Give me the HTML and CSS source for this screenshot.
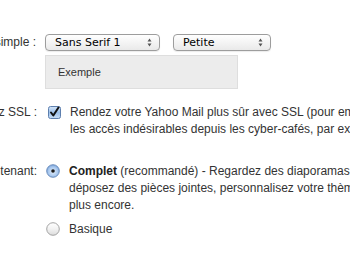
FILE: index.html
```html
<!DOCTYPE html>
<html lang="fr">
<head>
<meta charset="utf-8">
<title>Options</title>
<link rel="stylesheet" href="styles.css">
</head>
<body>
<div class="page">
  <div class="row row-font">
    <div class="label">Police de l'éditeur simple :</div>
    <div class="content">
      <div class="selects">
        <div class="select sel-family"><span>Sans Serif 1</span>
          <svg class="arrows" width="5" height="9" viewBox="0 0 5 9"><path d="M2.5 0.5 L4.5 3.5 L0.5 3.5 Z M2.5 8.5 L4.5 5.5 L0.5 5.5 Z" fill="#555"/></svg>
        </div>
        <div class="select sel-size"><span>Petite</span>
          <svg class="arrows" width="5" height="9" viewBox="0 0 5 9"><path d="M2.5 0.5 L4.5 3.5 L0.5 3.5 Z M2.5 8.5 L4.5 5.5 L0.5 5.5 Z" fill="#555"/></svg>
        </div>
      </div>
      <div class="preview">Exemple</div>
    </div>
  </div>

  <div class="row row-ssl">
    <div class="label">Activez SSL :</div>
    <div class="content option">
      <svg class="check" width="13" height="13" viewBox="0 0 13 13">
        <defs>
          <linearGradient id="cb" x1="0" y1="0" x2="0" y2="1">
            <stop offset="0" stop-color="#d6e6f8"/>
            <stop offset="0.5" stop-color="#9cc0ea"/>
            <stop offset="1" stop-color="#c9def5"/>
          </linearGradient>
        </defs>
        <rect x="0.5" y="0.5" width="12" height="12" rx="2" fill="url(#cb)" stroke="#5d7fae"/>
        <path d="M3 6.5 L5.3 9.5 L10.5 1.5" fill="none" stroke="#111" stroke-width="2" stroke-linecap="round" stroke-linejoin="round"/>
      </svg>
      <div class="text">Rendez votre Yahoo Mail plus sûr avec SSL (pour empêcher<br>les accès indésirables depuis les cyber-cafés, par exemple).</div>
    </div>
  </div>

  <div class="row row-version">
    <div class="label">Version que vous utilisez maintenant:</div>
    <div class="content">
      <div class="option">
        <svg class="radio" width="14" height="14" viewBox="0 0 14 14">
          <defs>
            <radialGradient id="rb" cx="0.5" cy="0.55" r="0.6">
              <stop offset="0" stop-color="#e4effb"/>
              <stop offset="0.6" stop-color="#a9c8ee"/>
              <stop offset="1" stop-color="#6e9bd6"/>
            </radialGradient>
          </defs>
          <circle cx="7" cy="7" r="6.3" fill="url(#rb)" stroke="#6487b8" stroke-width="0.9"/>
          <circle cx="7" cy="7" r="1.8" fill="#1a1a1a"/>
        </svg>
        <div class="text"><b>Complet</b> (recommandé) - Regardez des diaporamas de photos,<br>déposez des pièces jointes, personnalisez votre thème et bien<br>plus encore.</div>
      </div>
      <div class="option basic">
        <svg class="radio" width="14" height="14" viewBox="0 0 14 14">
          <defs>
            <linearGradient id="rw" x1="0" y1="0" x2="0" y2="1">
              <stop offset="0" stop-color="#ffffff"/>
              <stop offset="0.5" stop-color="#f2f2f2"/>
              <stop offset="1" stop-color="#dcdcdc"/>
            </linearGradient>
          </defs>
          <circle cx="7" cy="7" r="6.3" fill="url(#rw)" stroke="#9a9a9a" stroke-width="0.9"/>
        </svg>
        <div class="text">Basique</div>
      </div>
    </div>
  </div>
</div>
</body>
</html>
```

FILE: styles.css
```css
html, body {
  margin: 0;
  padding: 0;
  background: #ffffff;
  overflow: hidden;
}

body {
  width: 350px;
  height: 255px;
  font-family: "Liberation Sans", Arial, sans-serif;
  font-size: 12px;
  color: #333333;
}

.page {
  margin-left: -163px;
  padding-top: 34px;
  width: 700px;
}

.row {
  display: flex;
  align-items: flex-start;
}

.label {
  width: 200px;
  flex-shrink: 0;
  text-align: right;
  white-space: nowrap;
  line-height: 17px;
  padding-right: 8px;
}

.row-font .label {
  padding-right: 9px;
  width: 199px;
}

.content {
  flex: 1;
}

.selects {
  display: flex;
  gap: 13px;
  height: 17px;
}

.select {
  box-sizing: border-box;
  height: 17px;
  border: 1px solid #9d9d9d;
  border-radius: 4px;
  background: linear-gradient(#ffffff, #f4f4f4 50%, #e9e9e9);
  display: flex;
  align-items: center;
  justify-content: space-between;
  padding: 0 7px 0 9px;
  font-family: "DejaVu Sans", "Liberation Sans", sans-serif;
  font-size: 11px;
  color: #000000;
  box-shadow: 0 1px 1px rgba(0,0,0,0.08);
}

.sel-family { width: 115px; }
.sel-size { width: 98px; }

.arrows { display: block; }

.preview {
  box-sizing: border-box;
  width: 193px;
  height: 34px;
  margin-top: 4px;
  background: #ececec;
  border: 1px solid #dedede;
  padding-left: 12px;
  display: flex;
  align-items: center;
  font-size: 11px;
  color: #333333;
}

.row-ssl {
  margin-top: 15px;
}

.row-version {
  margin-top: 25px;
}

.option {
  display: flex;
  align-items: flex-start;
}

.text {
  line-height: 17px;
  white-space: nowrap;
}

.text b {
  font-weight: bold;
  color: #222222;
}

.check {
  flex-shrink: 0;
  margin: 2px 9px 0 3px;
  display: block;
}

.radio {
  flex-shrink: 0;
  margin: 1px 9px 0 1px;
  display: block;
}

.basic {
  margin-top: 7px;
}
```
